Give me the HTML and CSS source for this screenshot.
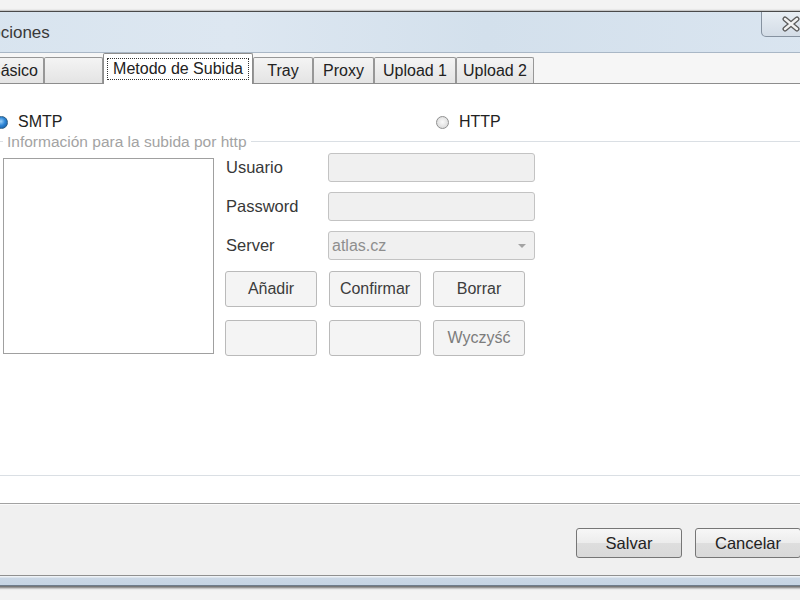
FILE: index.html
```html
<!DOCTYPE html>
<html lang="es">
<head>
  <meta charset="UTF-8" />
  <title>Opciones</title>
  <link rel="stylesheet" href="styles.css">
</head>
<body>
  <div class="desktop">
    <div class="window">
      <div class="titlebar">
        <span class="title">Opciones</span>
        <div class="close">
          <svg width="18" height="16" viewBox="0 0 18 16">
            <path d="M3 3 L15 13 M15 3 L3 13" stroke="#5b5b5b" stroke-width="5" stroke-linecap="round" fill="none"/>
            <path d="M3 3 L15 13 M15 3 L3 13" stroke="#f2f2f2" stroke-width="2.4" stroke-linecap="round" fill="none"/>
          </svg>
        </div>
      </div>

      <div class="tabs">
        <div class="tab w-basico">Básico</div>
        <div class="tab w-empty"></div>
        <div class="tab active"><span class="focus">Metodo de Subida</span></div>
        <div class="tab w-tray">Tray</div>
        <div class="tab w-proxy">Proxy</div>
        <div class="tab w-up1">Upload 1</div>
        <div class="tab w-up2">Upload 2</div>
      </div>

      <div class="panel">
        <div class="radios">
          <label class="radio"><span class="dot checked"></span>SMTP</label>
          <label class="radio"><span class="dot"></span>HTTP</label>
        </div>

        <fieldset class="group">
          <legend>Información para la subida por http</legend>
          <div class="group-body">
            <div class="listbox"></div>
            <div class="form">
              <div class="fields">
                <span class="label">Usuario</span>
                <div class="input"></div>
                <span class="label">Password</span>
                <div class="input"></div>
                <span class="label">Server</span>
                <div class="input combo">
                  <span>atlas.cz</span>
                  <span class="arrow"></span>
                </div>
              </div>
              <div class="buttons">
                <div class="btn">Añadir</div>
                <div class="btn">Confirmar</div>
                <div class="btn">Borrar</div>
                <div class="btn"></div>
                <div class="btn"></div>
                <div class="btn muted">Wyczyść</div>
              </div>
            </div>
          </div>
        </fieldset>
      </div>

      <div class="footer">
        <div class="btn-main">Salvar</div>
        <div class="btn-main">Cancelar</div>
      </div>
      <div class="frame-bottom"></div>
    </div>
  </div>
</body>
</html>
```

FILE: styles.css
```css
body {
  margin: 0;
  width: 800px;
  height: 600px;
  overflow: hidden;
  font-family: "Liberation Sans", Arial, sans-serif;
  color: #2a2a2a;
  background: #ececec;
}
.desktop {
  height: 600px;
  padding-top: 11px;
  box-sizing: border-box;
  background: #f3f3f3;
  overflow: hidden;
}
.window {
  margin-left: -24px;
  width: 850px;
  border-top: 1px solid #4a4a4a;
  background: #f6f6f6;
  box-shadow: 0 1px 2px 1px rgba(0, 0, 0, 0.55);
}

/* title bar */
.titlebar {
  height: 40px;
  display: flex;
  align-items: flex-start;
  background: linear-gradient(90deg, #d8e4ef 0%, #dde7f1 30%, #d3e0ec 60%, #dae5f0 100%);
  border-bottom: 1px solid #a9b7c6;
}
.title {
  margin-top: 11px;
  padding-left: 2px;
  font-size: 17px;
  color: #3a3a3a;
}
.close {
  margin-left: auto;
  margin-right: 5px;
  width: 58px;
  height: 24px;
  border: 1px solid #8692a0;
  border-top: none;
  border-radius: 0 0 5px 5px;
  background: linear-gradient(#e8eef4, #d3dce6);
  display: flex;
  align-items: center;
  justify-content: center;
}

/* tabs */
.tabs {
  height: 30px;
  padding-left: 8px;
  display: flex;
  align-items: flex-end;
}
.tab {
  box-sizing: border-box;
  height: 26px;
  border: 1px solid #979797;
  border-bottom: none;
  border-radius: 2px 2px 0 0;
  background: linear-gradient(#f4f4f4, #e4e4e4);
  font-size: 16px;
  line-height: 25px;
  text-align: center;
  color: #222;
}
.w-basico { width: 60px; }
.w-empty { width: 59px; }
.w-tray { width: 60px; }
.w-proxy { width: 61px; }
.w-up1 { width: 82px; }
.w-up2 { width: 78px; }
.tab.active {
  width: 150px;
  height: 31px;
  margin-bottom: -1px;
  position: relative;
  z-index: 1;
  background: #fff;
  border-color: #8d8d8d;
  padding: 4px 3px 0;
}
.focus {
  display: block;
  height: 22px;
  line-height: 20px;
  border: 1px dotted #333;
  box-sizing: border-box;
}

/* page */
.panel {
  box-sizing: border-box;
  height: 421px;
  margin: 0 8px;
  padding: 29px 0 0 14px;
  background: #fff;
  border-top: 1px solid #8d8d8d;
  border-bottom: 1px solid #a2a2a2;
}
.radios {
  display: grid;
  grid-template-columns: 438px auto;
  height: 18px;
}
.radio {
  display: flex;
  align-items: center;
  gap: 10px;
  font-size: 16px;
  color: #222;
}
.radio:first-child .dot {
  margin-left: -3px;
}
.dot {
  width: 13px;
  height: 13px;
  border-radius: 50%;
  box-sizing: border-box;
  border: 1px solid #8f9090;
  background: radial-gradient(circle at 50% 45%, #fafafa, #d2d2d2);
}
.dot.checked {
  border-color: #2d5f86;
  background: radial-gradient(circle at 45% 40%, #9ed3fa 0%, #2f86d6 45%, #0f4f96 100%);
}

.group {
  box-sizing: border-box;
  height: 343px;
  margin: 2px 0 0 0;
  padding: 3px 0 0 4px;
  border: 1px solid #dadfe4;
  min-width: 0;
}
.group legend {
  padding: 0 4px;
  font-size: 15.5px;
  line-height: 17px;
  color: #a3a3a3;
}
.group-body {
  display: flex;
  align-items: flex-start;
}
.listbox {
  width: 211px;
  height: 196px;
  margin-top: 5px;
  box-sizing: border-box;
  border: 1px solid #a0a0a0;
  background: #fff;
}
.form {
  margin-left: 11px;
}
.fields {
  display: grid;
  grid-template-columns: 103px 207px;
  grid-template-rows: 29px 29px 29px;
  row-gap: 10px;
  align-items: center;
}
.label {
  font-size: 16.5px;
  color: #383838;
  padding-left: 1px;
}
.input {
  height: 29px;
  box-sizing: border-box;
  border: 1px solid #c3c3c3;
  border-radius: 3px;
  background: #f0f0f0;
}
.combo {
  display: flex;
  align-items: center;
  justify-content: space-between;
  padding: 0 8px 0 3px;
  font-size: 16px;
  color: #8e8e8e;
}
.arrow {
  width: 0;
  height: 0;
  border-left: 4px solid transparent;
  border-right: 4px solid transparent;
  border-top: 4px solid #a3a3a3;
}
.buttons {
  margin-top: 11px;
  display: grid;
  grid-template-columns: 92px 92px 92px;
  grid-template-rows: 36px 36px;
  column-gap: 12px;
  row-gap: 13px;
}
.btn {
  box-sizing: border-box;
  border: 1px solid #bababa;
  border-radius: 3px;
  background: #f4f4f4;
  font-size: 16px;
  line-height: 34px;
  text-align: center;
  color: #3c3c3c;
}
.btn.muted {
  color: #7c7c7c;
}

/* footer */
.footer {
  height: 71px;
  box-sizing: border-box;
  padding: 23px 25px 0 0;
  display: flex;
  justify-content: flex-end;
  gap: 13px;
  background: #f0f0f0;
  border-top: 1px solid #fafafa;
}
.btn-main {
  width: 106px;
  height: 30px;
  box-sizing: border-box;
  border: 1px solid #767676;
  border-radius: 3px;
  background: linear-gradient(#f7f7f7 0%, #ececec 50%, #dedede 51%, #d9d9d9 100%);
  font-size: 16.5px;
  line-height: 28px;
  text-align: center;
  color: #222;
}
.frame-bottom {
  height: 11px;
  box-sizing: border-box;
  border-top: 1px solid #909090;
  border-bottom: 1px solid #6f7d8c;
  background: linear-gradient(#eef2f6 0, #eef2f6 1px, #cad7e5 2px, #c6d4e3 100%);
}
```
